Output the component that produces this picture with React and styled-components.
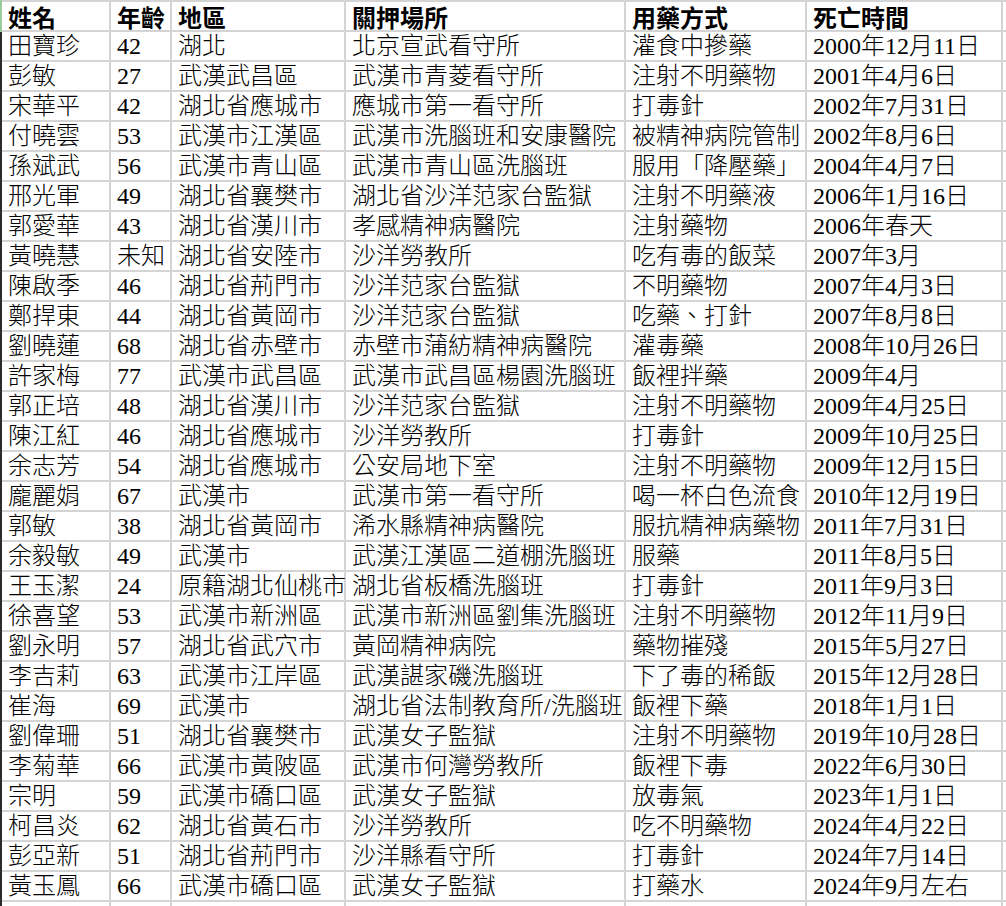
import React from "react";
import styled, { createGlobalStyle } from "styled-components";

const GlobalStyle = createGlobalStyle`
  html, body {
    margin: 0;
    padding: 0;
    background: #ffffff;
  }
  body {
    font-family: "Liberation Serif", "Noto Sans CJK TC", serif;
  }
`;

const headers = ["姓名", "年齡", "地區", "關押場所", "用藥方式", "死亡時間"];

const rows = [
  ["田寶珍", "42", "湖北", "北京宣武看守所", "灌食中摻藥", "2000年12月11日"],
  ["彭敏", "27", "武漢武昌區", "武漢市青菱看守所", "注射不明藥物", "2001年4月6日"],
  ["宋華平", "42", "湖北省應城市", "應城市第一看守所", "打毒針", "2002年7月31日"],
  ["付曉雲", "53", "武漢市江漢區", "武漢市洗腦班和安康醫院", "被精神病院管制", "2002年8月6日"],
  ["孫斌武", "56", "武漢市青山區", "武漢市青山區洗腦班", "服用「降壓藥」", "2004年4月7日"],
  ["邢光軍", "49", "湖北省襄樊市", "湖北省沙洋范家台監獄", "注射不明藥液", "2006年1月16日"],
  ["郭愛華", "43", "湖北省漢川市", "孝感精神病醫院", "注射藥物", "2006年春天"],
  ["黃曉慧", "未知", "湖北省安陸市", "沙洋勞教所", "吃有毒的飯菜", "2007年3月"],
  ["陳啟季", "46", "湖北省荊門市", "沙洋范家台監獄", "不明藥物", "2007年4月3日"],
  ["鄭捍東", "44", "湖北省黃岡市", "沙洋范家台監獄", "吃藥、打針", "2007年8月8日"],
  ["劉曉蓮", "68", "湖北省赤壁市", "赤壁市蒲紡精神病醫院", "灌毒藥", "2008年10月26日"],
  ["許家梅", "77", "武漢市武昌區", "武漢市武昌區楊園洗腦班", "飯裡拌藥", "2009年4月"],
  ["郭正培", "48", "湖北省漢川市", "沙洋范家台監獄", "注射不明藥物", "2009年4月25日"],
  ["陳江紅", "46", "湖北省應城市", "沙洋勞教所", "打毒針", "2009年10月25日"],
  ["余志芳", "54", "湖北省應城市", "公安局地下室", "注射不明藥物", "2009年12月15日"],
  ["龐麗娟", "67", "武漢市", "武漢市第一看守所", "喝一杯白色流食", "2010年12月19日"],
  ["郭敏", "38", "湖北省黃岡市", "浠水縣精神病醫院", "服抗精神病藥物", "2011年7月31日"],
  ["余毅敏", "49", "武漢市", "武漢江漢區二道棚洗腦班", "服藥", "2011年8月5日"],
  ["王玉潔", "24", "原籍湖北仙桃市", "湖北省板橋洗腦班", "打毒針", "2011年9月3日"],
  ["徐喜望", "53", "武漢市新洲區", "武漢市新洲區劉集洗腦班", "注射不明藥物", "2012年11月9日"],
  ["劉永明", "57", "湖北省武穴市", "黃岡精神病院", "藥物摧殘", "2015年5月27日"],
  ["李吉莉", "63", "武漢市江岸區", "武漢諶家磯洗腦班", "下了毒的稀飯", "2015年12月28日"],
  ["崔海", "69", "武漢市", "湖北省法制教育所/洗腦班", "飯裡下藥", "2018年1月1日"],
  ["劉偉珊", "51", "湖北省襄樊市", "武漢女子監獄", "注射不明藥物", "2019年10月28日"],
  ["李菊華", "66", "武漢市黃陂區", "武漢市何灣勞教所", "飯裡下毒", "2022年6月30日"],
  ["宗明", "59", "武漢市礄口區", "武漢女子監獄", "放毒氣", "2023年1月1日"],
  ["柯昌炎", "62", "湖北省黃石市", "沙洋勞教所", "吃不明藥物", "2024年4月22日"],
  ["彭亞新", "51", "湖北省荊門市", "沙洋縣看守所", "打毒針", "2024年7月14日"],
  ["黃玉鳳", "66", "武漢市礄口區", "武漢女子監獄", "打藥水", "2024年9月左右"],
];

const Sheet = styled.div`
  display: flex;
  width: 1006px;
  height: 906px;
  overflow: hidden;
  background: #d4d4d4;
`;

const RowHeaderEdge = styled.div`
  display: flex;
  flex-direction: column;
  width: 2px;
  flex: 0 0 2px;
`;

const EdgeSegment = styled.div`
  flex: ${(p) => (p.$header ? "0 0 32px" : "1 1 auto")};
  background: ${(p) => (p.$header ? "#9ccb9c" : "#2b2b2b")};
`;

const Grid = styled.div`
  flex: 1 1 auto;
  display: grid;
  grid-template-columns: 107px 59px 172px 278px 179px 194px 1fr;
  grid-auto-rows: 28px;
  gap: 2px;
  padding-top: 2px;
  align-content: start;
`;

const Cell = styled.div`
  background: #ffffff;
  color: #000000;
  padding-left: 6px;
  font-size: 24px;
  line-height: 29px;
  height: 28px;
  white-space: nowrap;
  overflow: visible;
  font-weight: ${(p) => (p.$header ? 700 : 300)};
  font-family: ${(p) =>
    p.$header
      ? `"Noto Sans CJK TC", "Liberation Sans", sans-serif`
      : `"Liberation Serif", "Noto Sans CJK TC", serif`};
`;

export default function App() {
  return (
    <>
      <GlobalStyle />
      <Sheet>
        <RowHeaderEdge>
          <EdgeSegment $header />
          <EdgeSegment />
        </RowHeaderEdge>
        <Grid>
          {headers.map((h) => (
            <Cell key={h} $header>
              {h}
            </Cell>
          ))}
          <Cell />
          {rows.map((r, i) => (
            <React.Fragment key={i}>
              {r.map((v, j) => (
                <Cell key={j}>{v}</Cell>
              ))}
              <Cell />
            </React.Fragment>
          ))}
          {headers.map((h) => (
            <Cell key={"tail-" + h} />
          ))}
          <Cell />
        </Grid>
      </Sheet>
    </>
  );
}
